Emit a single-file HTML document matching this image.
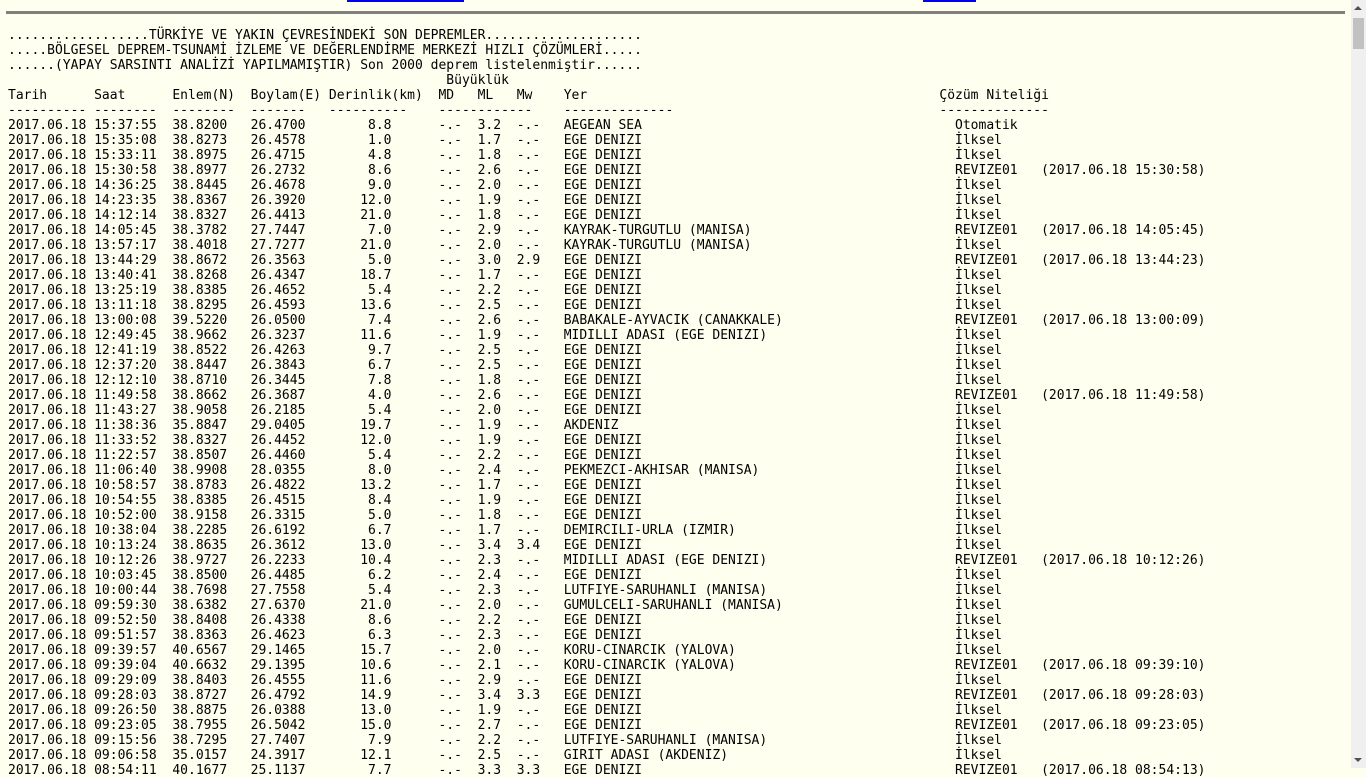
<!DOCTYPE html>
<html><head><meta charset="utf-8"><style>
html,body{margin:0;padding:0;}
body{width:1366px;height:768px;overflow:hidden;background:#fffff0;position:relative;font-family:"DejaVu Sans Mono","Liberation Mono",monospace;font-size:13px;color:#000;}
.hr{position:absolute;left:6px;top:11px;width:1339px;height:3px;background:#808080;}
.lk{position:absolute;top:0;height:2px;background:#0000ee;}
.sb{position:absolute;left:1351px;top:0;width:15px;height:768px;background:#f0f0f0;}
.th{position:absolute;left:1353px;top:18px;width:11px;height:31px;background:#c1c1c1;}
.up{position:absolute;left:1354px;top:6px;width:0;height:0;border-left:4px solid transparent;border-right:4px solid transparent;border-bottom:4px solid #505050;}
.dn{position:absolute;left:1354px;top:758px;width:0;height:0;border-left:4px solid transparent;border-right:4px solid transparent;border-top:4px solid #505050;}
pre{position:absolute;left:8px;top:28px;margin:0;font:inherit;line-height:15px;white-space:pre;}
i{font-style:normal;display:inline-block;width:11ch;text-align:right;}
u{text-decoration:none;display:inline-block;width:48ch;}
</style></head><body>
<div class="lk" style="left:347px;width:117px"></div>
<div class="lk" style="left:923px;width:53px"></div>
<div class="hr"></div>
<pre>..................TÜRKİYE VE YAKIN ÇEVRESİNDEKİ SON DEPREMLER....................
.....BÖLGESEL DEPREM-TSUNAMİ İZLEME VE DEĞERLENDİRME MERKEZİ HIZLI ÇÖZÜMLERİ.....
......(YAPAY SARSINTI ANALİZİ YAPILMAMIŞTIR) Son 2000 deprem listelenmiştir......
                                                        Büyüklük
Tarih      Saat      Enlem(N)  Boylam(E) Derinlik(km)  MD   ML   Mw    <u>Yer</u>Çözüm Niteliği
---------- --------  --------  -------   ----------    ------------    <u>--------------</u>--------------
2017.06.18 15:37:55  38.8200   26.4700<i>8.8</i>      -.-  3.2  -.-   <u>AEGEAN SEA</u>  Otomatik
2017.06.18 15:35:08  38.8273   26.4578<i>1.0</i>      -.-  1.7  -.-   <u>EGE DENIZI</u>  İlksel
2017.06.18 15:33:11  38.8975   26.4715<i>4.8</i>      -.-  1.8  -.-   <u>EGE DENIZI</u>  İlksel
2017.06.18 15:30:58  38.8977   26.2732<i>8.6</i>      -.-  2.6  -.-   <u>EGE DENIZI</u>  REVIZE01   (2017.06.18 15:30:58)
2017.06.18 14:36:25  38.8445   26.4678<i>9.0</i>      -.-  2.0  -.-   <u>EGE DENIZI</u>  İlksel
2017.06.18 14:23:35  38.8367   26.3920<i>12.0</i>      -.-  1.9  -.-   <u>EGE DENIZI</u>  İlksel
2017.06.18 14:12:14  38.8327   26.4413<i>21.0</i>      -.-  1.8  -.-   <u>EGE DENIZI</u>  İlksel
2017.06.18 14:05:45  38.3782   27.7447<i>7.0</i>      -.-  2.9  -.-   <u>KAYRAK-TURGUTLU (MANISA)</u>  REVIZE01   (2017.06.18 14:05:45)
2017.06.18 13:57:17  38.4018   27.7277<i>21.0</i>      -.-  2.0  -.-   <u>KAYRAK-TURGUTLU (MANISA)</u>  İlksel
2017.06.18 13:44:29  38.8672   26.3563<i>5.0</i>      -.-  3.0  2.9   <u>EGE DENIZI</u>  REVIZE01   (2017.06.18 13:44:23)
2017.06.18 13:40:41  38.8268   26.4347<i>18.7</i>      -.-  1.7  -.-   <u>EGE DENIZI</u>  İlksel
2017.06.18 13:25:19  38.8385   26.4652<i>5.4</i>      -.-  2.2  -.-   <u>EGE DENIZI</u>  İlksel
2017.06.18 13:11:18  38.8295   26.4593<i>13.6</i>      -.-  2.5  -.-   <u>EGE DENIZI</u>  İlksel
2017.06.18 13:00:08  39.5220   26.0500<i>7.4</i>      -.-  2.6  -.-   <u>BABAKALE-AYVACIK (CANAKKALE)</u>  REVIZE01   (2017.06.18 13:00:09)
2017.06.18 12:49:45  38.9662   26.3237<i>11.6</i>      -.-  1.9  -.-   <u>MIDILLI ADASI (EGE DENIZI)</u>  İlksel
2017.06.18 12:41:19  38.8522   26.4263<i>9.7</i>      -.-  2.5  -.-   <u>EGE DENIZI</u>  İlksel
2017.06.18 12:37:20  38.8447   26.3843<i>6.7</i>      -.-  2.5  -.-   <u>EGE DENIZI</u>  İlksel
2017.06.18 12:12:10  38.8710   26.3445<i>7.8</i>      -.-  1.8  -.-   <u>EGE DENIZI</u>  İlksel
2017.06.18 11:49:58  38.8662   26.3687<i>4.0</i>      -.-  2.6  -.-   <u>EGE DENIZI</u>  REVIZE01   (2017.06.18 11:49:58)
2017.06.18 11:43:27  38.9058   26.2185<i>5.4</i>      -.-  2.0  -.-   <u>EGE DENIZI</u>  İlksel
2017.06.18 11:38:36  35.8847   29.0405<i>19.7</i>      -.-  1.9  -.-   <u>AKDENIZ</u>  İlksel
2017.06.18 11:33:52  38.8327   26.4452<i>12.0</i>      -.-  1.9  -.-   <u>EGE DENIZI</u>  İlksel
2017.06.18 11:22:57  38.8507   26.4460<i>5.4</i>      -.-  2.2  -.-   <u>EGE DENIZI</u>  İlksel
2017.06.18 11:06:40  38.9908   28.0355<i>8.0</i>      -.-  2.4  -.-   <u>PEKMEZCI-AKHISAR (MANISA)</u>  İlksel
2017.06.18 10:58:57  38.8783   26.4822<i>13.2</i>      -.-  1.7  -.-   <u>EGE DENIZI</u>  İlksel
2017.06.18 10:54:55  38.8385   26.4515<i>8.4</i>      -.-  1.9  -.-   <u>EGE DENIZI</u>  İlksel
2017.06.18 10:52:00  38.9158   26.3315<i>5.0</i>      -.-  1.8  -.-   <u>EGE DENIZI</u>  İlksel
2017.06.18 10:38:04  38.2285   26.6192<i>6.7</i>      -.-  1.7  -.-   <u>DEMIRCILI-URLA (IZMIR)</u>  İlksel
2017.06.18 10:13:24  38.8635   26.3612<i>13.0</i>      -.-  3.4  3.4   <u>EGE DENIZI</u>  İlksel
2017.06.18 10:12:26  38.9727   26.2233<i>10.4</i>      -.-  2.3  -.-   <u>MIDILLI ADASI (EGE DENIZI)</u>  REVIZE01   (2017.06.18 10:12:26)
2017.06.18 10:03:45  38.8500   26.4485<i>6.2</i>      -.-  2.4  -.-   <u>EGE DENIZI</u>  İlksel
2017.06.18 10:00:44  38.7698   27.7558<i>5.4</i>      -.-  2.3  -.-   <u>LUTFIYE-SARUHANLI (MANISA)</u>  İlksel
2017.06.18 09:59:30  38.6382   27.6370<i>21.0</i>      -.-  2.0  -.-   <u>GUMULCELI-SARUHANLI (MANISA)</u>  İlksel
2017.06.18 09:52:50  38.8408   26.4338<i>8.6</i>      -.-  2.2  -.-   <u>EGE DENIZI</u>  İlksel
2017.06.18 09:51:57  38.8363   26.4623<i>6.3</i>      -.-  2.3  -.-   <u>EGE DENIZI</u>  İlksel
2017.06.18 09:39:57  40.6567   29.1465<i>15.7</i>      -.-  2.0  -.-   <u>KORU-CINARCIK (YALOVA)</u>  İlksel
2017.06.18 09:39:04  40.6632   29.1395<i>10.6</i>      -.-  2.1  -.-   <u>KORU-CINARCIK (YALOVA)</u>  REVIZE01   (2017.06.18 09:39:10)
2017.06.18 09:29:09  38.8403   26.4555<i>11.6</i>      -.-  2.9  -.-   <u>EGE DENIZI</u>  İlksel
2017.06.18 09:28:03  38.8727   26.4792<i>14.9</i>      -.-  3.4  3.3   <u>EGE DENIZI</u>  REVIZE01   (2017.06.18 09:28:03)
2017.06.18 09:26:50  38.8875   26.0388<i>13.0</i>      -.-  1.9  -.-   <u>EGE DENIZI</u>  İlksel
2017.06.18 09:23:05  38.7955   26.5042<i>15.0</i>      -.-  2.7  -.-   <u>EGE DENIZI</u>  REVIZE01   (2017.06.18 09:23:05)
2017.06.18 09:15:56  38.7295   27.7407<i>7.9</i>      -.-  2.2  -.-   <u>LUTFIYE-SARUHANLI (MANISA)</u>  İlksel
2017.06.18 09:06:58  35.0157   24.3917<i>12.1</i>      -.-  2.5  -.-   <u>GIRIT ADASI (AKDENIZ)</u>  İlksel
2017.06.18 08:54:11  40.1677   25.1137<i>7.7</i>      -.-  3.3  3.3   <u>EGE DENIZI</u>  REVIZE01   (2017.06.18 08:54:13)
</pre>
<div class="sb"></div><div class="th"></div><div class="up"></div><div class="dn"></div>
</body></html>
